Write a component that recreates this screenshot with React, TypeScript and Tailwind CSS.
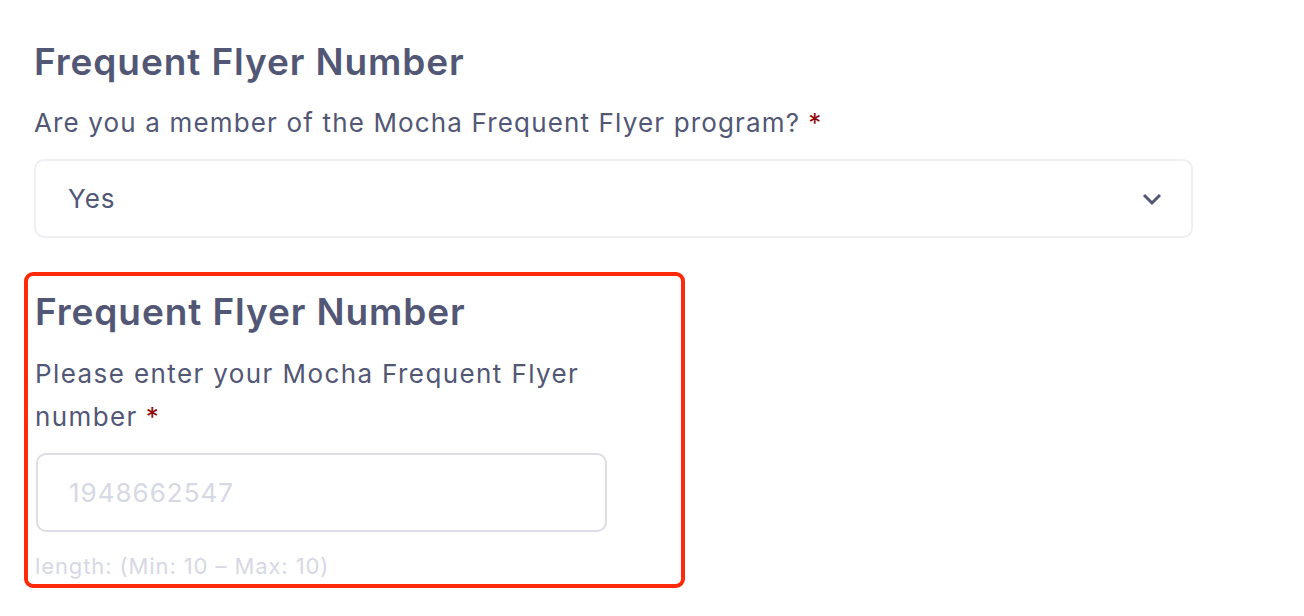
import React from "react";

const Req = () => <span className="ml-[8px] text-[#8f0a0a]">*</span>;

export default function App() {
  return (
    <div className="min-h-[616px] w-[1304px] bg-white font-['Inter',sans-serif] text-[#525775]">
      <div className="px-[34px] pt-[38px]">
        <h2 className="text-[37px] font-semibold leading-[48px] tracking-[0.9px]">
          Frequent Flyer Number
        </h2>
        <p className="mt-[20px] text-[26px] leading-[34px] tracking-[1.15px]">
          Are you a member of the Mocha Frequent Flyer program?
          <Req />
        </p>
        <div className="mt-[19px] flex h-[79px] w-[1159px] items-center justify-between rounded-[10px] border-2 border-[#efeff4] pl-[32px] pr-[28px]">
          <span className="text-[26px] tracking-[1px]">Yes</span>
          <svg width="22" height="14" viewBox="0 0 22 14" fill="none">
            <path d="M3 3l8 8 8-8" stroke="#525775" strokeWidth="3" />
          </svg>
        </div>
      </div>

      <div className="ml-[24px] mt-[34px] w-[661px] rounded-[9px] border-4 border-[#ff2a0a] px-[7px] pb-[3px] pt-[12px]">
        <h2 className="text-[37px] font-semibold leading-[48px] tracking-[0.9px]">
          Frequent Flyer Number
        </h2>
        <p className="mt-[16px] w-[575px] text-[26px] leading-[43px] tracking-[1.4px]">
          Please enter your Mocha Frequent Flyer number
          <Req />
        </p>
        <div className="ml-[1px] mt-[15px] flex h-[79px] w-[571px] items-center rounded-[10px] border-2 border-[#dcdde7] pl-[31px] text-[26px] tracking-[1px] text-[#d6d8e4]">
          1948662547
        </div>
        <p className="mt-[19px] text-[22px] leading-[30px] tracking-[0.9px] text-[#d6d8e4]">
          length: (Min: 10 – Max: 10)
        </p>
      </div>
    </div>
  );
}
